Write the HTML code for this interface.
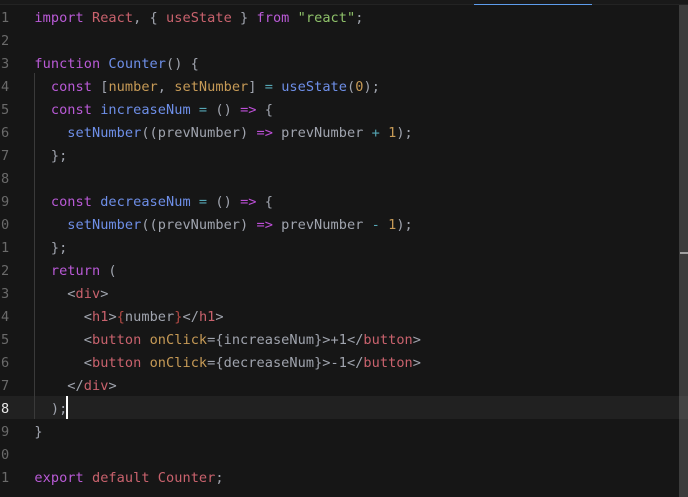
<!DOCTYPE html>
<html><head><meta charset="utf-8">
<style>
html,body{margin:0;padding:0;width:688px;height:497px;overflow:hidden;background:#161616}
#e{position:relative;width:688px;height:497px;overflow:hidden;font-family:"DejaVu Sans Mono","Liberation Mono",monospace;font-size:13.6px;color:#abb2bf}
.l{position:absolute;left:34.4px;white-space:pre;height:23px;line-height:23px;letter-spacing:.04px;filter:blur(.3px)}
.n{position:absolute;left:1px;width:8px;height:23px;line-height:23px;color:#6a6a6a;overflow:hidden;white-space:pre;filter:blur(.3px)}
.k{color:#b95ad6}.r{color:#c9626d}.b{color:#6e8fe8}.y{color:#c69a56}.g{color:#8fc26a}.c{color:#56a7b5}.p{color:#a0a4ae}.t{color:#c9626d}.a{color:#c69a56}.m{color:#be4fd8}.x{color:#b24a45}
</style></head><body><div id="e">
<div style="position:absolute;left:0;top:0;width:688px;height:4px;background:#191919;border-bottom:1px solid #232323"></div>
<div style="position:absolute;left:474px;top:4px;width:118px;height:1px;background:#5d9cec"></div>
<div style="position:absolute;left:0;top:396px;width:688px;height:23px;background:#212121"></div>
<div style="position:absolute;left:679px;top:5px;width:9px;height:492px;background:#3c3c3c"></div>
<div style="position:absolute;left:679px;top:396px;width:9px;height:23px;background:#444"></div>
<div style="position:absolute;left:680px;top:252px;width:8px;height:2px;background:#a0a0a0"></div>
<div style="position:absolute;left:34px;top:73px;width:1px;height:346px;background:#3a3a3a"></div>
<div style="position:absolute;left:66px;top:396px;width:2px;height:23px;background:#fff"></div>
<div class="n" style="top:7px">1</div>
<div class="n" style="top:30px">2</div>
<div class="n" style="top:53px">3</div>
<div class="n" style="top:76px">4</div>
<div class="n" style="top:99px">5</div>
<div class="n" style="top:122px">6</div>
<div class="n" style="top:145px">7</div>
<div class="n" style="top:168px">8</div>
<div class="n" style="top:191px">9</div>
<div class="n" style="top:214px">0</div>
<div class="n" style="top:237px">1</div>
<div class="n" style="top:260px">2</div>
<div class="n" style="top:283px">3</div>
<div class="n" style="top:306px">4</div>
<div class="n" style="top:329px">5</div>
<div class="n" style="top:352px">6</div>
<div class="n" style="top:375px">7</div>
<div class="n" style="top:398px;color:#e8e8e8">8</div>
<div class="n" style="top:421px">9</div>
<div class="n" style="top:444px">0</div>
<div class="n" style="top:467px">1</div>
<div class="l" style="top:7px"><span class="k">import</span> <span class="r">React</span><span class="p">, { </span><span class="r">useState</span><span class="p"> } </span><span class="k">from</span> <span class="g">"react"</span><span class="p">;</span></div>
<div class="l" style="top:53px"><span class="k">function</span> <span class="b">Counter</span><span class="p">() {</span></div>
<div class="l" style="top:76px">  <span class="k">const</span> <span class="p">[</span><span class="y">number</span><span class="p">, </span><span class="y">setNumber</span><span class="p">] </span><span class="c">=</span> <span class="b">useState</span><span class="p">(</span><span class="y">0</span><span class="p">);</span></div>
<div class="l" style="top:99px">  <span class="k">const</span> <span class="b">increaseNum</span> <span class="c">=</span> <span class="p">() </span><span class="m">=&gt;</span><span class="p"> {</span></div>
<div class="l" style="top:122px">    <span class="b">setNumber</span><span class="p">((prevNumber) </span><span class="m">=&gt;</span><span class="p"> prevNumber </span><span class="c">+</span> <span class="y">1</span><span class="p">);</span></div>
<div class="l" style="top:145px">  <span class="p">};</span></div>
<div class="l" style="top:191px">  <span class="k">const</span> <span class="b">decreaseNum</span> <span class="c">=</span> <span class="p">() </span><span class="m">=&gt;</span><span class="p"> {</span></div>
<div class="l" style="top:214px">    <span class="b">setNumber</span><span class="p">((prevNumber) </span><span class="m">=&gt;</span><span class="p"> prevNumber </span><span class="c">-</span> <span class="y">1</span><span class="p">);</span></div>
<div class="l" style="top:237px">  <span class="p">};</span></div>
<div class="l" style="top:260px">  <span class="k">return</span><span class="p"> (</span></div>
<div class="l" style="top:283px">    <span class="p">&lt;</span><span class="t">div</span><span class="p">&gt;</span></div>
<div class="l" style="top:306px">      <span class="p">&lt;</span><span class="t">h1</span><span class="p">&gt;</span><span class="x">{</span><span class="p">number</span><span class="x">}</span><span class="p">&lt;/</span><span class="t">h1</span><span class="p">&gt;</span></div>
<div class="l" style="top:329px">      <span class="p">&lt;</span><span class="t">button</span> <span class="a">onClick</span><span class="p">={increaseNum}&gt;+1&lt;/</span><span class="t">button</span><span class="p">&gt;</span></div>
<div class="l" style="top:352px">      <span class="p">&lt;</span><span class="t">button</span> <span class="a">onClick</span><span class="p">={decreaseNum}&gt;-1&lt;/</span><span class="t">button</span><span class="p">&gt;</span></div>
<div class="l" style="top:375px">    <span class="p">&lt;/</span><span class="t">div</span><span class="p">&gt;</span></div>
<div class="l" style="top:398px">  <span class="p">);</span></div>
<div class="l" style="top:421px"><span class="p">}</span></div>
<div class="l" style="top:467px"><span class="k">export</span> <span class="r">default</span> <span class="r">Counter</span><span class="p">;</span></div>
</div></body></html>
